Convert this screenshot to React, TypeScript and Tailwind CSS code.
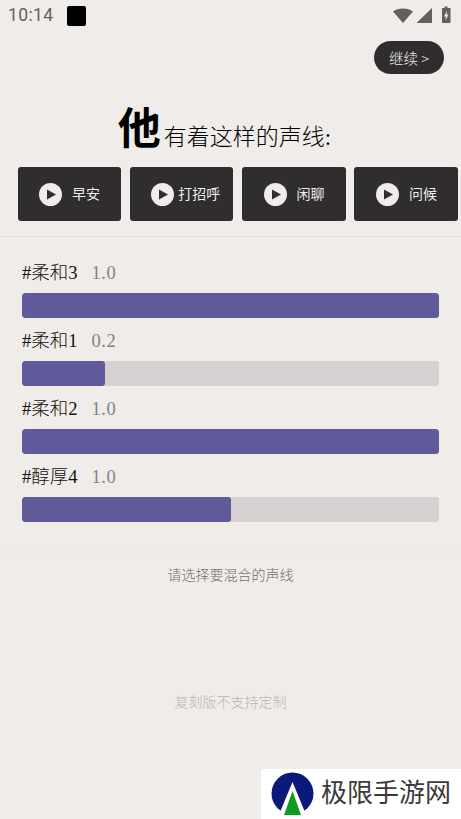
import React from 'react';

const serif = '"Liberation Serif", "Noto Sans CJK SC", serif';

const samples = [
  { name: '早安', gap: 'ml-[10px]' },
  { name: '打招呼', gap: 'ml-[4px]' },
  { name: '闲聊', gap: 'ml-[10px]' },
  { name: '问候', gap: 'ml-[10px]' },
];

const voices = [
  { name: '#柔和3', value: '1.0', width: '100%' },
  { name: '#柔和1', value: '0.2', width: '20%' },
  { name: '#柔和2', value: '1.0', width: '100%' },
  { name: '#醇厚4', value: '1.0', width: '50%' },
];

function StatusBar() {
  return (
    <div className="flex h-[31px] items-center justify-between pl-[8px] pr-[8px]">
      <div className="flex items-center">
        <span className="text-[17.5px] font-[Roboto] leading-none tracking-[0.4px] text-[#625f5e]">10:14</span>
        <div className="ml-[13px] h-[20px] w-[19px] rounded-[2px] bg-black" />
      </div>
      <svg width="60" height="20" viewBox="0 0 60 20">
        {/* wifi */}
        <path d="M0 5.5 C5 1.5 15 1.5 20 5.5 L10 17 Z" fill="#625f5e" />
        {/* signal */}
        <path d="M23.5 17 L39 17 L39 2 Z" fill="#625f5e" />
        {/* battery */}
        <path d="M49 2 H51.5 V0.5 H54.5 V2 H57.5 V17 H49 Z" fill="#625f5e" />
        <path d="M54 4.5 L51 10.5 H53 L52.5 14.5 L55.5 8.5 H53.5 Z" fill="#efecea" />
      </svg>
    </div>
  );
}

function PlayIcon() {
  return (
    <svg width="23" height="23" viewBox="0 0 23 23" className="shrink-0">
      <circle cx="11.5" cy="11.5" r="11.5" fill="#efecea" />
      <path d="M8 6.5 L17 11.5 L8 16.5 Z" fill="#2f2d2d" />
    </svg>
  );
}

function Logo() {
  return (
    <svg width="44" height="46" viewBox="0 0 44 46" className="shrink-0">
      <circle cx="21.5" cy="22.5" r="21" fill="#0a1a78" />
      <path d="M21.5 11 L36 46 H7 Z" fill="#ffffff" />
      <path d="M21.5 20 L30 44 H13 Z" fill="#0f9d1f" />
    </svg>
  );
}

export default function App() {
  return (
    <div className="relative flex h-[819px] w-[461px] flex-col overflow-hidden bg-[#efecea]" style={{ fontFamily: serif }}>
      <StatusBar />

      <div className="flex justify-end pr-[17px] pt-[10px]">
        <button
          className="flex h-[33px] w-[70px] items-center justify-center rounded-full bg-[#2f2d2d] text-[14.5px] font-light text-[#efecea]"
          style={{ fontFamily: '"Noto Sans CJK SC", sans-serif' }}
        >
          继续 &gt;
        </button>
      </div>

      <h1 className="mt-[27px] flex h-[56px] items-end justify-center pr-[12px] text-black">
        <span className="text-[43px] font-bold leading-[54px]">他</span>
        <span className="mb-[4px] ml-[3px] text-[23px] font-light leading-[30px]">有着这样的声线:</span>
      </h1>

      <div className="mt-[10px] flex gap-[8.8px] pl-[17.5px]">
        {samples.map((s) => (
          <button
            key={s.name}
            className="flex h-[54px] w-[103.5px] shrink-0 items-center justify-start rounded-[3px] bg-[#2f2d2d] pl-[21.5px]"
          >
            <PlayIcon />
            <span className={`${s.gap} text-[14px] text-[#efecea]`}>{s.name}</span>
          </button>
        ))}
      </div>

      <div className="mt-[15px] h-px bg-[#dfdbd9]" />

      <div className="flex flex-col gap-[11px] px-[22px] pt-[24px]">
        {voices.map((v) => (
          <div key={v.name}>
            <div className="flex h-[32px] items-center pb-[8px] text-[18.5px] font-light leading-none">
              <span className="text-[#111111]">{v.name}</span>
              <span className="ml-[14px] tracking-[0.5px] text-[#858280]">{v.value}</span>
            </div>
            <div className="h-[25px] w-[417px] overflow-hidden rounded-[3px] bg-[#d6d1d0]">
              <div className="h-full rounded-[3px] bg-[#605a9a]" style={{ width: v.width }} />
            </div>
          </div>
        ))}
      </div>

      <div className="mt-[29px] h-[2px] bg-[#ebe8e6]" />

      <p className="mt-[13px] text-center text-[14px] font-light leading-[20px] text-[#6f6c6a]">请选择要混合的声线</p>
      <p className="mt-[107px] text-center text-[14px] font-light leading-[20px] text-[#b9b6b4]">复刻版不支持定制</p>

      {/* watermark */}
      <div className="absolute bottom-0 right-0 flex h-[50px] w-[200px] items-center overflow-hidden bg-white pl-[10px]">
        <Logo />
        <span className="ml-[6px] whitespace-nowrap text-[26px] leading-none text-[#3a3a3a]">极限手游网</span>
      </div>
    </div>
  );
}
